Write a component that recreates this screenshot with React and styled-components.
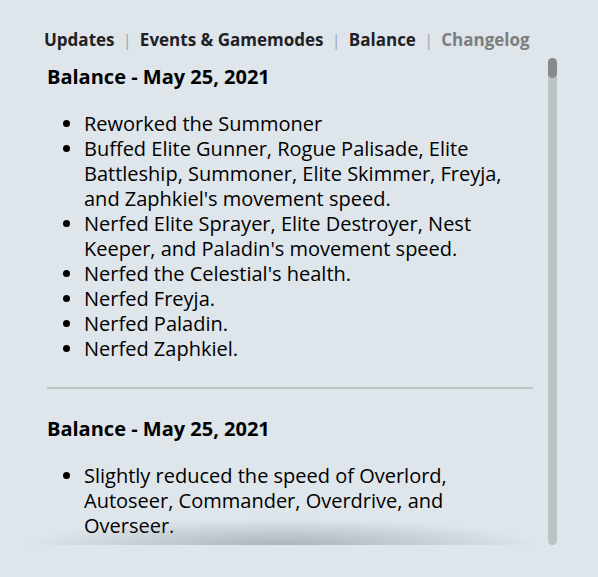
import React from "react"
import styled, { createGlobalStyle } from "styled-components"

const GlobalStyle = createGlobalStyle`
    html, body {
        margin: 0;
        padding: 0;
        background: #dee5eb;
        font-family: "Open Sans", "DejaVu Sans", sans-serif;
    }
`

const Page = styled.div`
    padding: 28px 41px 0 44px;
    height: 577px;
    box-sizing: border-box;
`

const Nav = styled.nav`
    display: flex;
    align-items: center;
    height: 22px;
    margin-bottom: 8px;
    font-size: 17px;
    font-weight: 700;
`

const NavLink = styled.span`
    color: ${(props) => (props.$active ? "#7c7e80" : "#1f2224")};
`

const Sep = styled.span`
    color: #a3a9ad;
    font-weight: 400;
    margin: 0 8px;
`

const Panel = styled.div`
    position: relative;
    display: flex;
    gap: 15px;
    width: 513px;
    height: 487px;

    &::after {
        content: "";
        position: absolute;
        left: -20px;
        right: 18px;
        bottom: 0;
        height: 26px;
        pointer-events: none;
        background: radial-gradient(ellipse 50% 100% at 50% 100%, rgba(90, 100, 104, 0.38), rgba(90, 100, 104, 0) 100%);
    }
`

const Scroller = styled.div`
    flex: 1;
    height: 100%;
    overflow-y: auto;
    box-sizing: border-box;
    padding: 7px 0 0 3px;
    scrollbar-width: none;

    &::-webkit-scrollbar {
        display: none;
    }
`

const Track = styled.div`
    width: 9px;
    height: 100%;
    background: #bcc3c6;
    border-radius: 5px;
    flex-shrink: 0;
`

const Thumb = styled.div`
    height: 20px;
    background: #878b8e;
    border-radius: 5px;
`

const Entry = styled.section`
    & + & {
        border-top: 2px solid #bdc4c6;
        margin-top: 26px;
        padding-top: 28px;
    }
`

const Heading = styled.h3`
    margin: 0;
    font-size: 20px;
    line-height: 24px;
    font-weight: 700;
    color: #000;
`

const List = styled.ul`
    margin: 22px 0 0;
    padding-left: 37px;
    font-size: 20px;
    line-height: 25px;
    color: #000;
`

const entries = [
    {
        title: "Balance - May 25, 2021",
        items: [
            "Reworked the Summoner",
            "Buffed Elite Gunner, Rogue Palisade, Elite Battleship, Summoner, Elite Skimmer, Freyja, and Zaphkiel's movement speed.",
            "Nerfed Elite Sprayer, Elite Destroyer, Nest Keeper, and Paladin's movement speed.",
            "Nerfed the Celestial's health.",
            "Nerfed Freyja.",
            "Nerfed Paladin.",
            "Nerfed Zaphkiel.",
        ],
    },
    {
        title: "Balance - May 25, 2021",
        items: [
            "Slightly reduced the speed of Overlord, Autoseer, Commander, Overdrive, and Overseer.",
        ],
    },
    {
        title: "Balance - May 18, 2021",
        items: [
            "Buffed Rogue Palisade health.",
            "Nerfed Elite Skimmer missile damage.",
            "Reduced Nest Keeper drone count.",
        ],
    },
]

const App = () => {
    const tabs = ["Updates", "Events & Gamemodes", "Balance", "Changelog"]

    return (
        <>
            <GlobalStyle />
            <Page>
                <Nav>
                    {tabs.map((tab, index) => (
                        <React.Fragment key={tab}>
                            {index > 0 && <Sep>|</Sep>}
                            <NavLink $active={tab === "Changelog"}>{tab}</NavLink>
                        </React.Fragment>
                    ))}
                </Nav>
                <Panel>
                    <Scroller>
                        {entries.map((entry, index) => (
                            <Entry key={index}>
                                <Heading>{entry.title}</Heading>
                                <List>
                                    {entry.items.map((item) => (
                                        <li key={item}>{item}</li>
                                    ))}
                                </List>
                            </Entry>
                        ))}
                    </Scroller>
                    <Track>
                        <Thumb />
                    </Track>
                </Panel>
            </Page>
        </>
    )
}

export default App
